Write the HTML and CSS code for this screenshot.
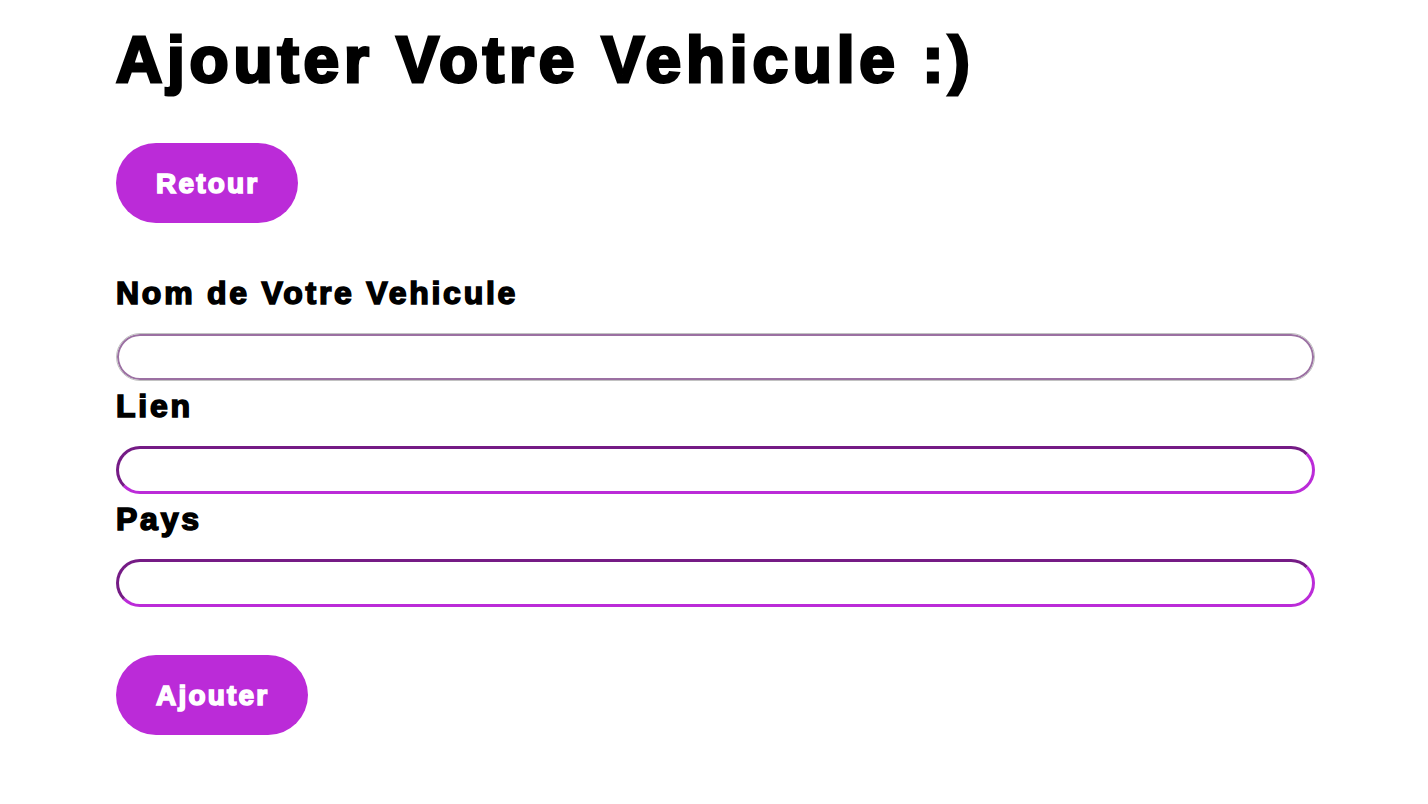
FILE: index.html
```html
<!DOCTYPE html>
<html lang="fr">
<head>
<meta charset="utf-8">
<title>Ajouter Votre Vehicule</title>
<link rel="stylesheet" href="styles.css">
</head>
<body>
<main class="page">
  <h1 class="title">Ajouter Votre Vehicule :)</h1>
  <div class="actions">
    <a class="btn btn-back" href="#">Retour</a>
  </div>
  <form class="form">
    <label class="label" for="nom">Nom de Votre Vehicule</label>
    <input class="field field-first" id="nom" type="text">
    <label class="label" for="lien">Lien</label>
    <input class="field" id="lien" type="text">
    <label class="label" for="pays">Pays</label>
    <input class="field" id="pays" type="text">
    <div class="submit-row">
      <button class="btn btn-submit" type="button">Ajouter</button>
    </div>
  </form>
</main>
</body>
</html>
```
FILE: styles.css
```css
html, body {
  margin: 0;
  padding: 0;
  background: #ffffff;
}

.page {
  padding-left: 116px;
  font-family: "Liberation Sans", Arial, sans-serif;
  color: #000000;
}

.title {
  margin: 23px 0 0;
  font-size: 64px;
  line-height: 74px;
  font-weight: 700;
  letter-spacing: 4.8px;
  -webkit-text-stroke: 3px #000000;
}

.actions {
  margin-top: 46px;
  display: flex;
}

.btn {
  display: inline-flex;
  align-items: center;
  justify-content: center;
  height: 80px;
  padding: 0 39px 0 40px;
  box-sizing: border-box;
  border: none;
  border-radius: 40px;
  background: #bb2bd8;
  color: #ffffff;
  font-family: "Liberation Sans", Arial, sans-serif;
  font-size: 28px;
  font-weight: 700;
  letter-spacing: 2.2px;
  -webkit-text-stroke: 1.6px #ffffff;
  text-decoration: none;
  cursor: pointer;
}

.btn-back {
  padding-top: 2px;
}

.btn-submit {
  padding-top: 2px;
}

.form {
  display: flex;
  flex-direction: column;
  align-items: flex-start;
  margin-top: 52px;
}

.label {
  display: block;
  font-size: 32px;
  line-height: 37px;
  font-weight: 700;
  letter-spacing: 2.75px;
  -webkit-text-stroke: 1.6px #000000;
  margin-top: 7px;
}

.label:first-child {
  margin-top: 0;
}

.field {
  display: block;
  width: 1199px;
  height: 48px;
  box-sizing: border-box;
  margin: 21px 0 0;
  padding: 0 16px;
  border: 3px solid;
  border-color: #751b85 #bb2bd8 #bb2bd8 #751b85;
  border-radius: 24px;
  background: #ffffff;
  font-size: 20px;
  outline: none;
}

.field-first {
  border: 1px solid #c2c2c2;
  box-shadow: inset 0 0 0 2px #9b70a2;
}

.submit-row {
  margin-top: 48px;
  display: flex;
}
```
